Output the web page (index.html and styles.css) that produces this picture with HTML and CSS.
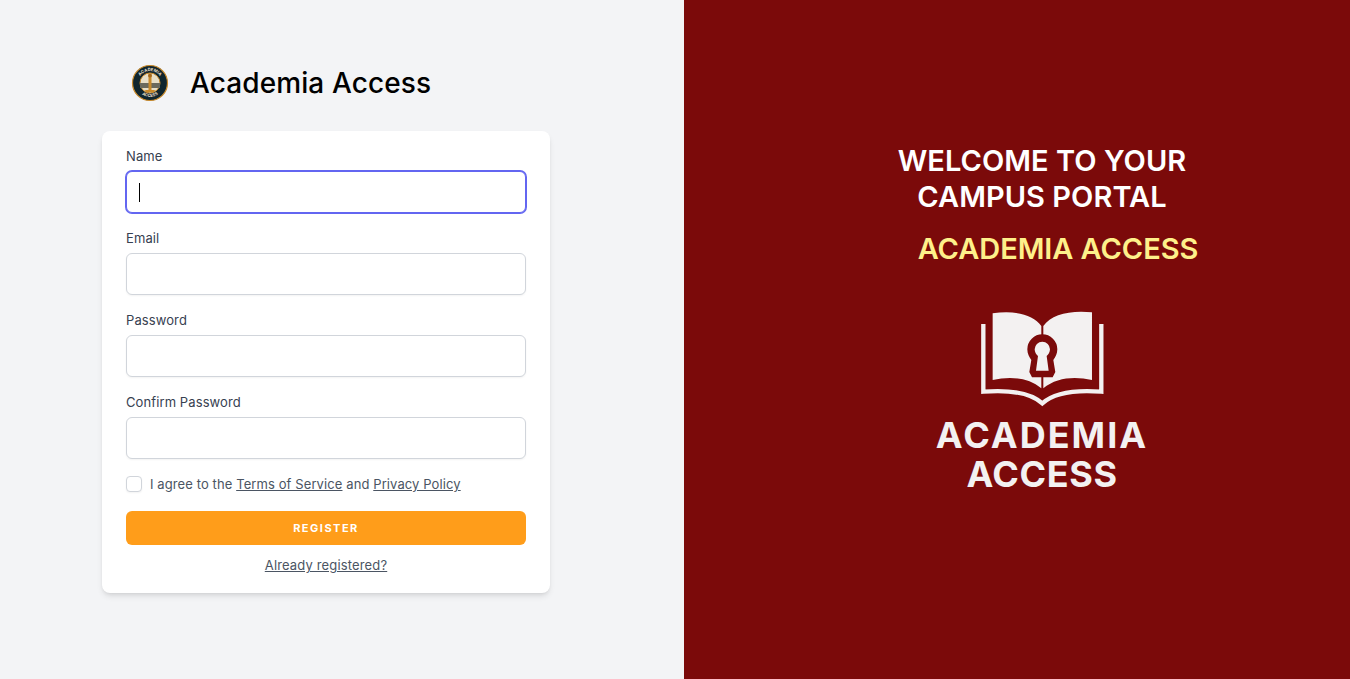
FILE: index.html
```html
<!DOCTYPE html>
<html lang="en">
<head>
<meta charset="utf-8">
<title>Academia Access</title>
<link rel="stylesheet" href="styles.css">
</head>
<body>
<main class="split">
  <section class="auth">
    <header class="brand">
      <svg class="brand-logo" viewBox="0 0 40 40" aria-hidden="true">
        <defs>
          <path id="arcTop" d="M8 20a12 12 0 0 1 24 0"/>
          <path id="arcBottom" d="M6.500 23a13.800 13.800 0 0 0 27 0"/>
        </defs>
        <circle cx="20" cy="20" r="17.500" fill="#10262e" stroke="#c98a2b" stroke-width="1.200"/>
        <circle cx="20" cy="20" r="10" fill="#e8dfc8" stroke="#c98a2b" stroke-width="1"/>
        <rect x="10" y="20" width="20" height="5" fill="#6b6a5e"/>
        <rect x="18.500" y="13" width="3" height="14" fill="#c98a2b"/>
        <circle cx="20" cy="12.500" r="2" fill="#a66a1d"/>
        <path d="M15 27h10l-1 2h-8z" fill="#c98a2b"/>
        <text class="logo-arc"><textPath href="#arcTop" startOffset="50%" text-anchor="middle">ACADEMIA</textPath></text>
        <text class="logo-arc"><textPath href="#arcBottom" startOffset="50%" text-anchor="middle">ACCESS</textPath></text>
      </svg>
      <h1 class="brand-name">Academia Access</h1>
    </header>
    <form class="card">
      <div class="field">
        <label class="label">Name</label>
        <div class="input is-focused"><span class="caret"></span></div>
      </div>
      <div class="field">
        <label class="label">Email</label>
        <div class="input"></div>
      </div>
      <div class="field">
        <label class="label">Password</label>
        <div class="input"></div>
      </div>
      <div class="field">
        <label class="label">Confirm Password</label>
        <div class="input"></div>
      </div>
      <div class="terms">
        <span class="checkbox"></span>
        <span>I agree to the <a class="link" href="#">Terms of Service</a> and <a class="link" href="#">Privacy Policy</a></span>
      </div>
      <button class="submit" type="button">REGISTER</button>
      <a class="link login" href="#">Already registered?</a>
    </form>
  </section>
  <section class="promo">
    <h2 class="promo-title">WELCOME TO YOUR<br>CAMPUS PORTAL</h2>
    <p class="promo-name">ACADEMIA ACCESS</p>
    <svg class="book" viewBox="0 0 144 98" aria-hidden="true">
      <g transform="translate(-50 -10) scale(.3333)">
        <path class="book-page" d="M218 40C285 30 340 44 364 78V265C325 232 270 228 218 240Z"/>
        <path class="book-page" d="M516 37C449 30 394 44 370 78V265C409 232 464 228 516 240Z"/>
        <path class="book-edge" d="M190 72V275C255 270 325 272 367 310C409 272 479 270 544 275V72"/>
        <path class="book-key" d="M322 148a45 45 0 0 1 90 0c0 14-6 24-12 32l6 36-8 16h-62l-8-16 6-36c-6-8-12-18-12-32Z"/>
        <path class="book-hole" d="M344 148a23 23 0 0 1 46 0c0 9-5 16-10 20l6 44h-38l6-44c-5-4-10-11-10-20Z"/>
      </g>
    </svg>
    <p class="wordmark"><span class="wordmark-top">ACADEMIA</span><span class="wordmark-bottom">ACCESS</span></p>
  </section>
</main>
</body>
</html>
```
FILE: styles.css
```css
* { box-sizing: border-box; }
html, body { margin: 0; height: 100%; }
body {
  font-family: Inter, "Noto Sans", sans-serif;
  color: #374151;
  overflow: hidden;
}
.split { display: flex; height: 679px; }
.auth {
  width: 684px;
  flex: none;
  background: #f3f4f6;
  padding: 62px 0 0 102px;
}
.brand {
  display: flex;
  align-items: center;
  gap: 20px;
  height: 42px;
  margin: 0 0 27px 28px;
}
.brand-logo { width: 40px; height: 40px; flex: none; }
.logo-arc { font: 700 4.2px Inter, sans-serif; fill: #e8dfc8; }
.brand-name {
  margin: 0;
  font-size: 28px;
  line-height: 42px;
  font-weight: 500;
  color: #000;
  letter-spacing: .1px;
}
.card {
  display: flex;
  flex-direction: column;
  width: 448px;
  height: 462px;
  padding: 15px 24px 16px;
  background: #fff;
  border-radius: 8px;
  box-shadow: 0 4px 6px -1px rgba(0,0,0,.1), 0 2px 4px -2px rgba(0,0,0,.1);
}
.field { margin-bottom: 16px; }
.label {
  display: block;
  font-size: 13px;
  line-height: 20px;
  font-weight: 400;
  letter-spacing: .1px;
  color: #374151;
}
.input {
  position: relative;
  height: 42px;
  margin-top: 5px;
  margin-bottom: -1px;
  background: #fff;
  border: 1px solid #d1d5db;
  border-radius: 6px;
  box-shadow: 0 1px 2px rgba(0,0,0,.05);
}
.input.is-focused {
  border-color: #6366f1;
  box-shadow: 0 0 0 1px #6366f1;
}
.caret {
  position: absolute;
  left: 12px;
  top: 11px;
  width: 1px;
  height: 19px;
  background: #000;
}
.terms {
  display: flex;
  align-items: center;
  gap: 8px;
  height: 20px;
  font-size: 13px;
  letter-spacing: .1px;
  color: #4b5563;
}
.checkbox {
  width: 16px;
  height: 16px;
  background: #fff;
  border: 1px solid #d1d5db;
  border-radius: 4px;
  box-shadow: 0 1px 2px rgba(0,0,0,.05);
}
.link { color: #4b5563; text-decoration: underline; }
.submit {
  height: 34px;
  margin-top: 17px;
  border: 0;
  border-radius: 6px;
  background: #ff9d1a;
  color: #fff;
  font: 700 11px Inter, sans-serif;
  letter-spacing: 1.5px;
}
.login {
  align-self: center;
  margin-top: 10px;
  font-size: 13px;
  line-height: 20px;
  letter-spacing: .15px;
}
.promo {
  flex: 1;
  display: flex;
  flex-direction: column;
  align-items: center;
  background: #7b0a0a;
  color: #fff;
  padding: 143px 0 0 50px;
}
.promo-title {
  margin: 0;
  font-size: 29px;
  line-height: 36px;
  font-weight: 600;
  text-align: center;
  letter-spacing: .05px;
}
.promo-name {
  margin: 16px 0 0 32px;
  font-size: 29px;
  line-height: 36px;
  font-weight: 600;
  color: #fef08a;
  letter-spacing: -.05px;
}
.book { width: 144px; height: 98px; margin-top: 43px; display: block; }
.book-page { fill: #f3f1f1; }
.book-edge { fill: none; stroke: #f3f1f1; stroke-width: 13; stroke-linejoin: miter; }
.book-key { fill: #7b0a0a; }
.book-hole { fill: #f3f1f1; }
.wordmark {
  margin: 8px 0 0;
  display: flex;
  flex-direction: column;
  align-items: center;
  font-size: 36px;
  line-height: 39px;
  font-weight: 700;
  color: #f3f1f1;
}
.wordmark-top { letter-spacing: 2px; }
.wordmark-bottom { letter-spacing: .6px; }
```
